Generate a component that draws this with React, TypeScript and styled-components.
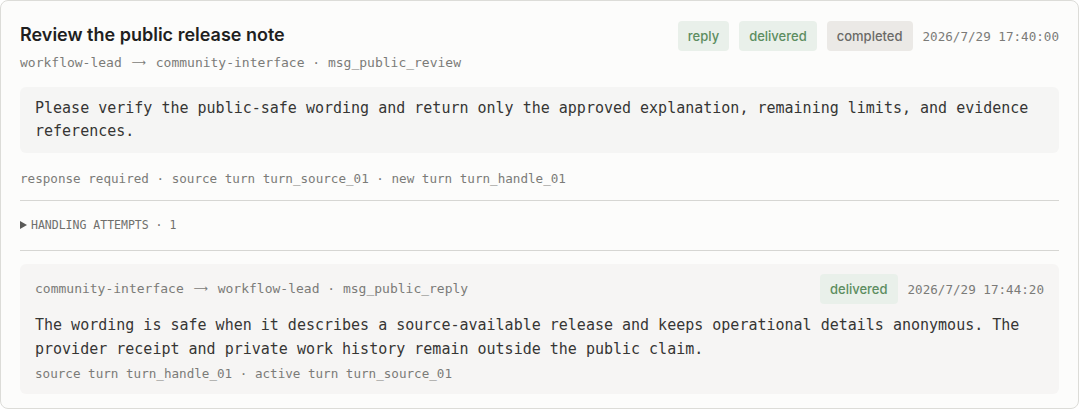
import React from "react";
import styled, { createGlobalStyle } from "styled-components";

const Global = createGlobalStyle`
  html, body { margin: 0; padding: 0; background: #ffffff; }
  body { font-family: Inter, "Noto Sans", sans-serif; }
  * { box-sizing: border-box; }
`;

const MONO = `"DejaVu Sans Mono", "Liberation Mono", monospace`;

const Card = styled.article`
  width: 1079px;
  height: 409px;
  border: 1px solid #dcdcd8;
  border-radius: 8px;
  background: #fcfcfb;
  padding: 20px 19px 14px 19px;
  display: flex;
  flex-direction: column;
  overflow: hidden;
`;

const Header = styled.header`
  display: flex;
  align-items: flex-start;
  justify-content: space-between;
  gap: 16px;
`;

const TitleBlock = styled.div`
  display: flex;
  flex-direction: column;
  gap: 7px;
  padding-top: 2px;
`;

const Title = styled.h2`
  margin: 0;
  font-family: Inter, "Noto Sans", sans-serif;
  font-size: 18px;
  line-height: 24px;
  font-weight: 600;
  color: #1f1f1f;
`;

const Meta = styled.div<{ $size?: number }>`
  font-family: ${MONO};
  font-size: ${(p) => p.$size ?? 12.6}px;
  line-height: 18px;
  color: #7b7b78;
  white-space: nowrap;
`;

const Arrow = styled.span`
  display: inline-block;
  width: 34px;
  text-align: center;
  font-family: "DejaVu Sans", sans-serif;
  font-size: 10px;
  vertical-align: 1px;
`;

const Side = styled.div`
  display: flex;
  align-items: center;
  gap: 10px;
`;

const Badge = styled.span<{ $tone: "green" | "gray" }>`
  display: inline-flex;
  align-items: center;
  height: 30px;
  padding: 0 10px;
  border-radius: 4px;
  font-family: Inter, "Noto Sans", sans-serif;
  font-size: 13px;
  font-weight: 500;
  background: ${(p) => (p.$tone === "green" ? "#e9f0ea" : "#ebe9e6")};
  color: ${(p) => (p.$tone === "green" ? "#5c8d60" : "#6a6a67")};
`;

const Stamp = styled.span`
  font-family: ${MONO};
  font-size: 12.6px;
  color: #7b7b78;
  white-space: nowrap;
`;

const Body = styled.div`
  margin-top: 15px;
  background: #f5f5f4;
  border-radius: 6px;
  padding: 10px 15px 10px 15px;
  font-family: ${MONO};
  font-size: 15px;
  line-height: 23px;
  color: #363634;
`;

const Footer = styled(Meta)`
  margin-top: 17px;
`;

const Attempts = styled.div`
  margin-top: 12px;
  padding: 16px 0 17px;
  border-top: 1px solid #d6d6d3;
  border-bottom: 1px solid #d6d6d3;
  display: flex;
  align-items: center;
  gap: 4px;
  font-family: ${MONO};
  font-size: 11.5px;
  line-height: 16px;
  color: #6f6f6c;
`;

const Caret = styled.svg`
  width: 7px;
  height: 8px;
  flex: none;
`;

const Reply = styled.section`
  margin-top: 13px;
  background: #f6f5f4;
  border-radius: 6px;
  padding: 10px 15px 11px 15px;
  display: flex;
  flex-direction: column;
`;

const ReplyHead = styled.div`
  display: flex;
  align-items: center;
  justify-content: space-between;
`;

const ReplyText = styled.div`
  margin-top: 9px;
  font-family: ${MONO};
  font-size: 15px;
  line-height: 24px;
  color: #363634;
`;

const ReplyFoot = styled(Meta)`
  margin-top: 4px;
`;

export default function App() {
  return (
    <>
      <Global />
      <Card>
        <Header>
          <TitleBlock>
            <Title>Review the public release note</Title>
            <Meta $size={13}>
              workflow-lead<Arrow>⟶</Arrow>community-interface · msg_public_review
            </Meta>
          </TitleBlock>
          <Side>
            <Badge $tone="green">reply</Badge>
            <Badge $tone="green">delivered</Badge>
            <Badge $tone="gray">completed</Badge>
            <Stamp>2026/7/29 17:40:00</Stamp>
          </Side>
        </Header>
        <Body>
          Please verify the public-safe wording and return only the approved explanation, remaining limits, and
          evidence references.
        </Body>
        <Footer>response required · source turn turn_source_01 · new turn turn_handle_01</Footer>
        <Attempts>
          <Caret viewBox="0 0 7 8">
            <polygon points="0,0 7,4 0,8" fill="#5a5a58" />
          </Caret>
          HANDLING ATTEMPTS · 1
        </Attempts>
        <Reply>
          <ReplyHead>
            <Meta $size={13}>
              community-interface<Arrow>⟶</Arrow>workflow-lead · msg_public_reply
            </Meta>
            <Side>
              <Badge $tone="green">delivered</Badge>
              <Stamp>2026/7/29 17:44:20</Stamp>
            </Side>
          </ReplyHead>
          <ReplyText>
            The wording is safe when it describes a source-available release and keeps operational details
            anonymous. The provider receipt and private work history remain outside the public claim.
          </ReplyText>
          <ReplyFoot>source turn turn_handle_01 · active turn turn_source_01</ReplyFoot>
        </Reply>
      </Card>
    </>
  );
}
